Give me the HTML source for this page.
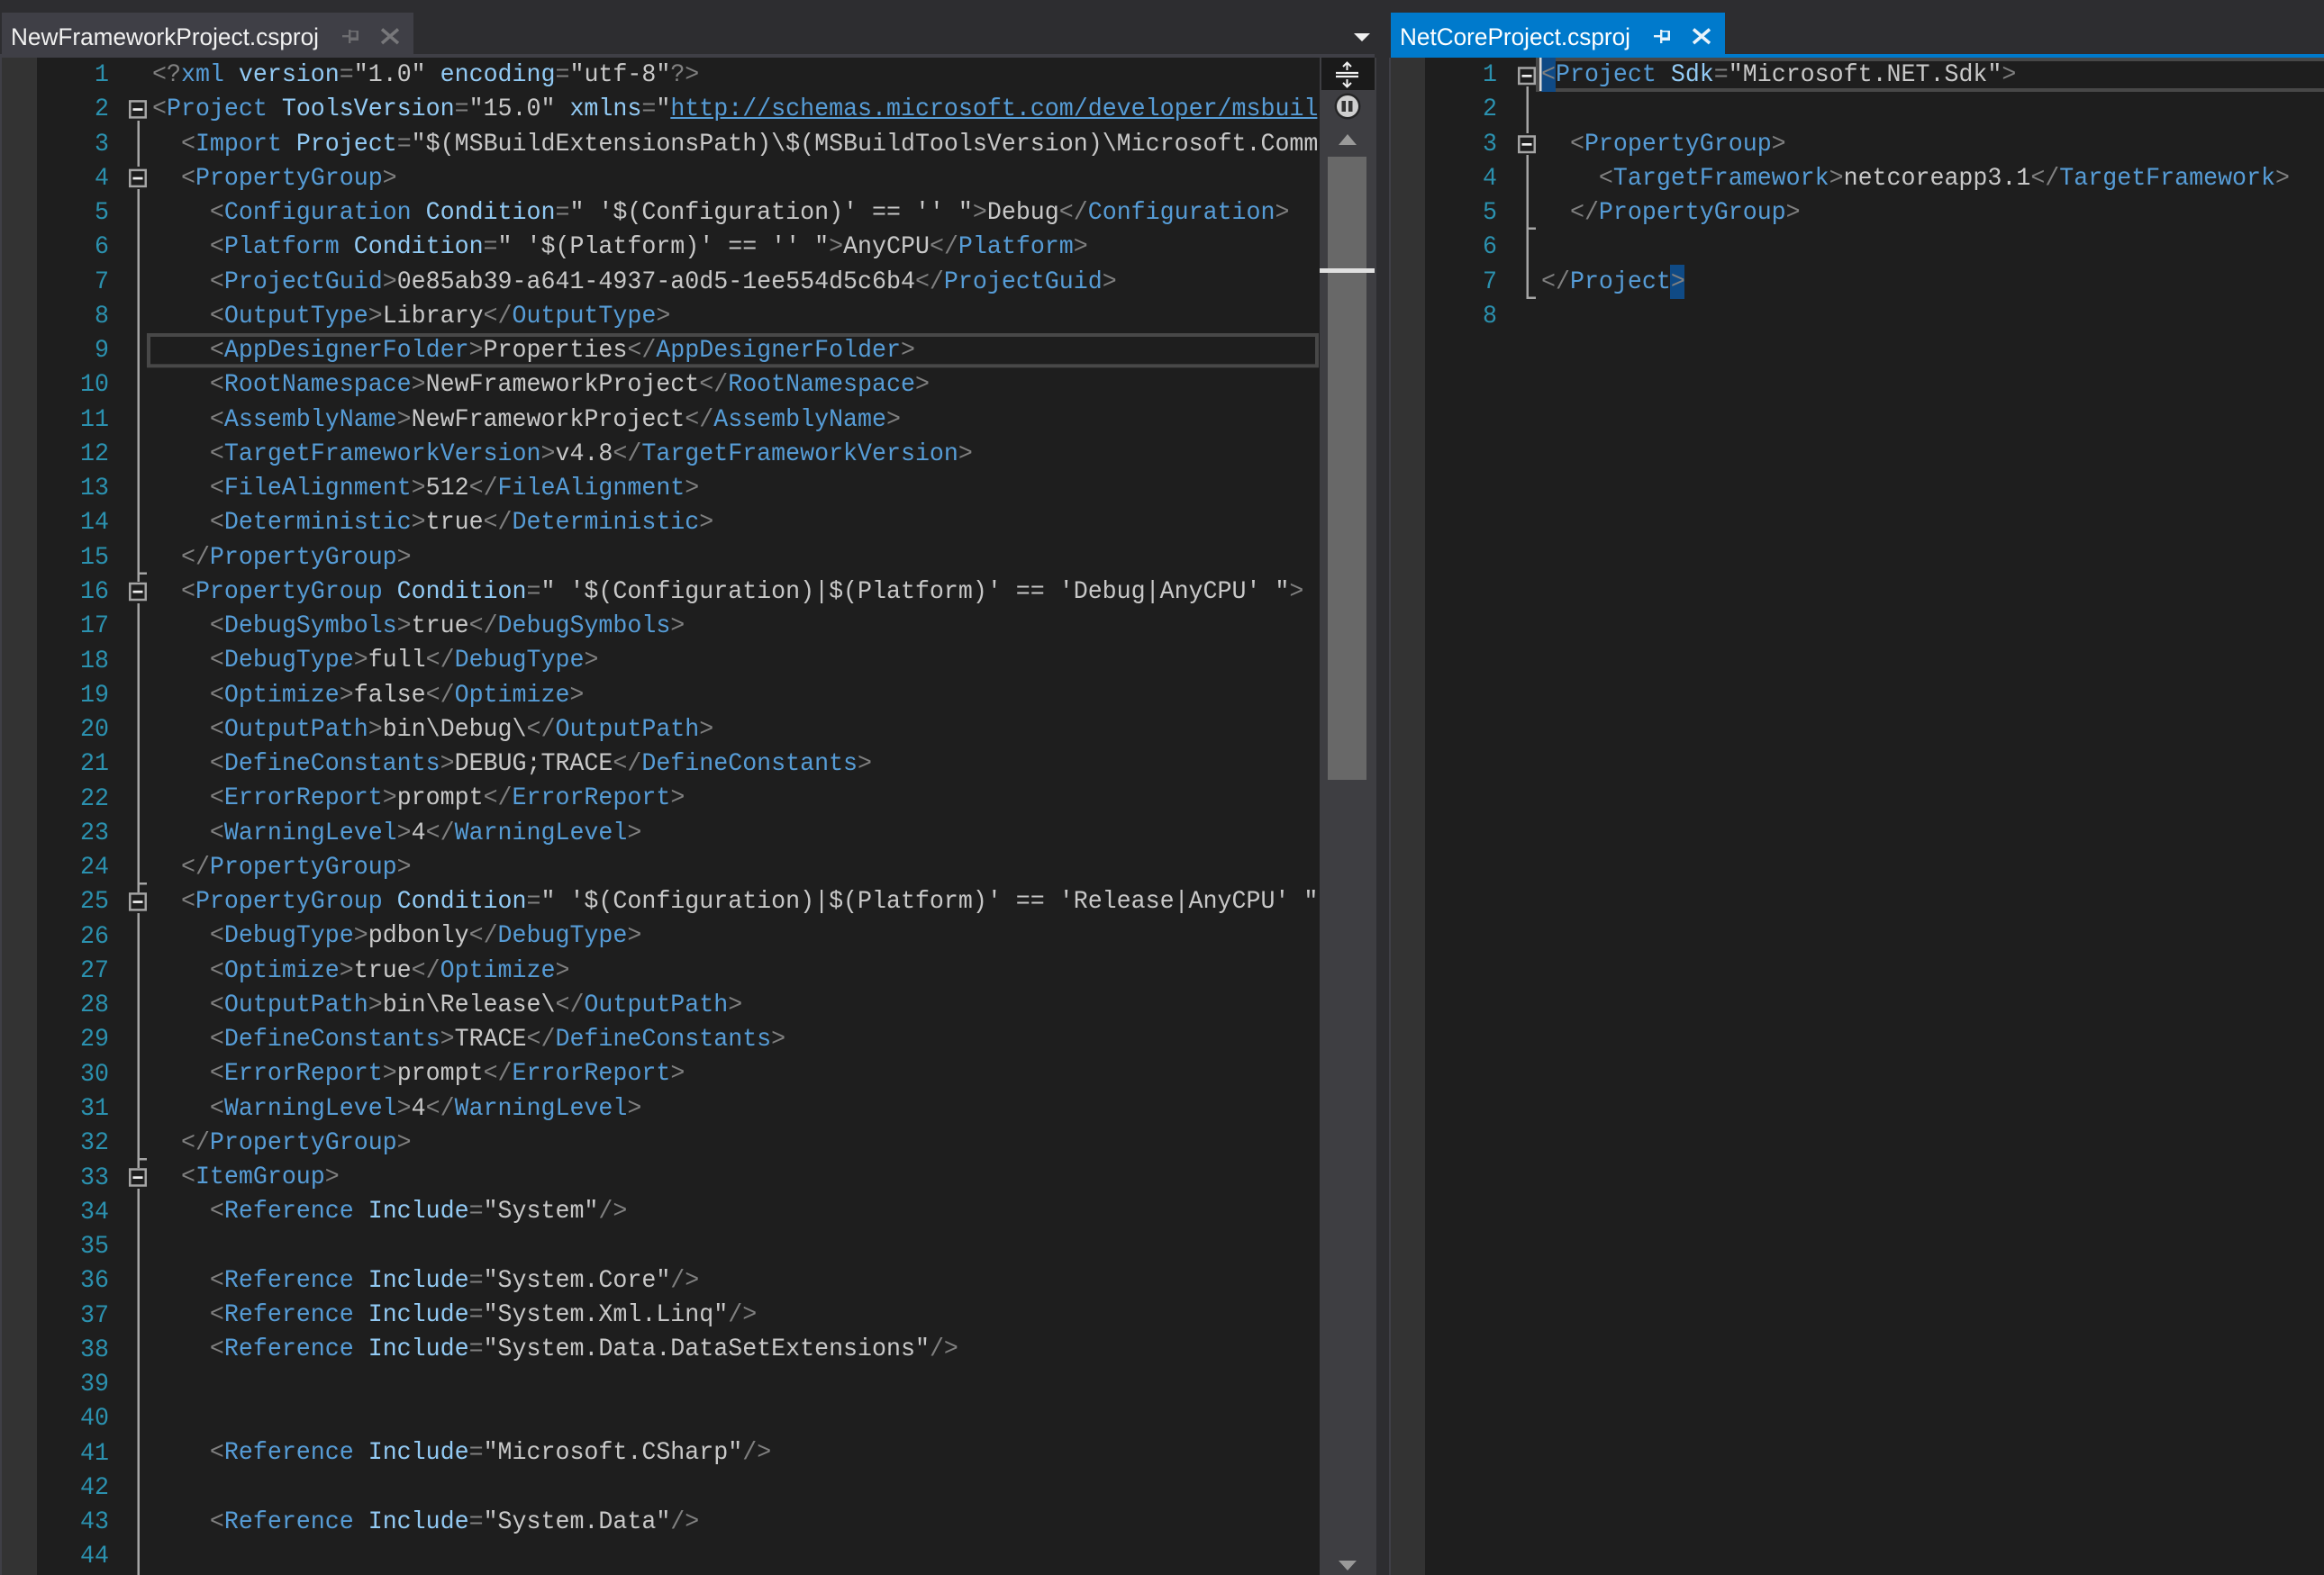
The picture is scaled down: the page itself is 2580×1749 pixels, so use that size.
<!DOCTYPE html>
<html><head><meta charset="utf-8"><title>csproj</title>
<style>
html,body{margin:0;padding:0;width:2580px;height:1749px;overflow:hidden;background:#2d2d30}
svg{position:absolute;left:0;top:0}
.c{position:absolute;top:65px;font:28px/38.26px "Liberation Mono",monospace;color:#c8c8c8;white-space:normal;overflow:hidden;transform:scaleX(.951);transform-origin:0 0;height:1684px}
.c div{height:38.26px;white-space:pre}
.n{color:#2b91af;text-align:right;transform-origin:100% 0;white-space:pre}
i{font-style:normal;color:#808080}
b{font-weight:normal;color:#569cd6}
em{font-style:normal;color:#92caf4}
u{color:#569cd6}
</style></head><body>
<svg width="2580" height="1749" viewBox="0 0 2580 1749">
<rect width="2580" height="1749" fill="#2d2d30"/>
<rect x="0" y="60" width="1526" height="4" fill="#3f3f46"/>
<rect x="2" y="14" width="457" height="50" fill="#3f3f46"/>
<rect x="1544" y="14" width="371" height="50" fill="#007acc"/>
<rect x="1544" y="60" width="1036" height="4" fill="#007acc"/>
<rect x="0" y="64" width="2" height="1685" fill="#3f3f46"/>
<rect x="2" y="64" width="39" height="1685" fill="#333333"/>
<rect x="41" y="64" width="1424" height="1685" fill="#1e1e1e"/>
<rect x="1465" y="64" width="63" height="1685" fill="#3e3e42"/>
<rect x="1528" y="64" width="14" height="1685" fill="#2d2d30"/>
<rect x="1542" y="64" width="2" height="1685" fill="#3f3f46"/>
<rect x="1544" y="64" width="38" height="1685" fill="#333333"/>
<rect x="1582" y="64" width="998" height="1685" fill="#1e1e1e"/>
<!-- highlights -->
<rect x="165" y="372" width="1297" height="34.3" fill="none" stroke="#484848" stroke-width="4"/>
<rect x="1707" y="66" width="875" height="34" fill="none" stroke="#484848" stroke-width="4"/>
<rect x="1711" y="64" width="16" height="38" fill="#0f4a85"/>
<rect x="1854" y="294" width="16" height="38" fill="#0f4a85"/>
<rect x="1709" y="64" width="2.5" height="37" fill="#d8d8d8"/>
<!-- left folds -->
<g fill="#a5a5a5">
<rect x="152.5" y="134" width="2.5" height="51"/>
<rect x="152.5" y="210" width="2.5" height="436"/>
<rect x="152.5" y="670" width="2.5" height="321"/>
<rect x="152.5" y="1014" width="2.5" height="283"/>
<rect x="152.5" y="1320" width="2.5" height="429"/>
<rect x="152.5" y="635.5" width="10.5" height="2.5"/>
<rect x="152.5" y="980" width="10.5" height="2.5"/>
<rect x="152.5" y="1286" width="10.5" height="2.5"/>
<rect x="1694.5" y="96" width="2.5" height="52"/>
<rect x="1694.5" y="172" width="2.5" height="160"/>
<rect x="1694.5" y="252.500" width="10.5" height="2.5"/>
<rect x="1694.5" y="329.500" width="10.5" height="2.5"/>
</g>
<g fill="#1e1e1e" stroke="#a5a5a5" stroke-width="2.5">
<rect x="144.25" y="112.400" width="17.5" height="18"/>
<rect x="144.25" y="188.900" width="17.5" height="18"/>
<rect x="144.25" y="648" width="17.5" height="18"/>
<rect x="144.25" y="992.400" width="17.5" height="18"/>
<rect x="144.25" y="1298.500" width="17.5" height="18"/>
<rect x="1686.25" y="75.500" width="17.5" height="17.5"/>
<rect x="1686.25" y="151.500" width="17.5" height="17.5"/>
</g>
<g fill="#eeeeee">
<rect x="147.500" y="120.200" width="11" height="2.7"/>
<rect x="147.500" y="196.700" width="11" height="2.7"/>
<rect x="147.500" y="655.800" width="11" height="2.7"/>
<rect x="147.500" y="1000.200" width="11" height="2.7"/>
<rect x="147.500" y="1306.300" width="11" height="2.7"/>
<rect x="1689.500" y="83" width="11" height="2.7"/>
<rect x="1689.500" y="159" width="11" height="2.7"/>
</g>
<!-- tabs -->
<text x="12" y="50" font-family="Liberation Sans,sans-serif" font-size="27" fill="#f1f1f1" textLength="342" lengthAdjust="spacingAndGlyphs">NewFrameworkProject.csproj</text>
<text x="1554" y="50" font-family="Liberation Sans,sans-serif" font-size="27" fill="#ffffff" textLength="256" lengthAdjust="spacingAndGlyphs">NetCoreProject.csproj</text>
<g fill="#6d6d70">
<rect x="380" y="39" width="8" height="2.4"/>
<rect x="387" y="33" width="2.4" height="15"/>
<path d="M389 34h9v11h-9v-3.500h6.500v-6h-6.500z"/>
</g>
<path d="M424 32.500L442 48M442 32.500L424 48" stroke="#77777a" stroke-width="3.500" fill="none"/>
<g fill="#e8f3fb">
<rect x="1836" y="39" width="8" height="2.4"/>
<rect x="1843" y="33" width="2.4" height="15"/>
<path d="M1845 34h9v11h-9v-3.500h6.500v-6h-6.500z"/>
</g>
<path d="M1880 32.500L1898 48M1898 32.500L1880 48" stroke="#e8f3fb" stroke-width="3.500" fill="none"/>
<path d="M1503 37h18l-9 9z" fill="#f1f1f1"/>
<!-- scrollbar -->
<rect x="1467" y="64" width="59" height="36" fill="#1a1a1a"/>
<g fill="none" stroke="#f1f1f1" stroke-width="2">
<path d="M1483 81h25M1483 85h25" stroke-width="2.2"/>
<path d="M1495.500 70v8M1495.500 88v8"/>
<path d="M1491 74l4.500-4.500 4.500 4.500M1491 92l4.500 4.500 4.500-4.500"/>
</g>
<circle cx="1496" cy="118" r="14.500" fill="#252526"/>
<circle cx="1496" cy="118" r="12" fill="#cfcfcf"/>
<rect x="1489.500" y="112" width="4.500" height="12" fill="#333"/>
<rect x="1497" y="112" width="4.500" height="12" fill="#333"/>
<path d="M1486 161l10-12 10 12z" fill="#999999"/>
<rect x="1474" y="174" width="43" height="692" fill="#686868"/>
<rect x="1465" y="298" width="61" height="5" fill="#e0e0e0"/>
<path d="M1486 1733h20l-10 11z" fill="#999999"/>
</svg>

<div class="c n" style="left:21px;width:100px">1
2
3
4
5
6
7
8
9
10
11
12
13
14
15
16
17
18
19
20
21
22
23
24
25
26
27
28
29
30
31
32
33
34
35
36
37
38
39
40
41
42
43
44</div>

<div class="c" style="left:168.5px;width:1360px"><div><i>&lt;?</i><b>xml</b> <em>version</em><i>=</i>"1.0" <em>encoding</em><i>=</i>"utf-8"<i>?&gt;</i></div>
<div><i>&lt;</i><b>Project</b> <em>ToolsVersion</em><i>=</i>"15.0" <em>xmlns</em><i>=</i>"<u>http://schemas.microsoft.com/developer/msbuild/2003</u>"<i>&gt;</i></div>
<div>  <i>&lt;</i><b>Import</b> <em>Project</em><i>=</i>"$(MSBuildExtensionsPath)\$(MSBuildToolsVersion)\Microsoft.Common.props"<i>/&gt;</i></div>
<div>  <i>&lt;</i><b>PropertyGroup</b><i>&gt;</i></div>
<div>    <i>&lt;</i><b>Configuration</b> <em>Condition</em><i>=</i>" '$(Configuration)' == '' "<i>&gt;</i>Debug<i>&lt;/</i><b>Configuration</b><i>&gt;</i></div>
<div>    <i>&lt;</i><b>Platform</b> <em>Condition</em><i>=</i>" '$(Platform)' == '' "<i>&gt;</i>AnyCPU<i>&lt;/</i><b>Platform</b><i>&gt;</i></div>
<div>    <i>&lt;</i><b>ProjectGuid</b><i>&gt;</i>0e85ab39-a641-4937-a0d5-1ee554d5c6b4<i>&lt;/</i><b>ProjectGuid</b><i>&gt;</i></div>
<div>    <i>&lt;</i><b>OutputType</b><i>&gt;</i>Library<i>&lt;/</i><b>OutputType</b><i>&gt;</i></div>
<div>    <i>&lt;</i><b>AppDesignerFolder</b><i>&gt;</i>Properties<i>&lt;/</i><b>AppDesignerFolder</b><i>&gt;</i></div>
<div>    <i>&lt;</i><b>RootNamespace</b><i>&gt;</i>NewFrameworkProject<i>&lt;/</i><b>RootNamespace</b><i>&gt;</i></div>
<div>    <i>&lt;</i><b>AssemblyName</b><i>&gt;</i>NewFrameworkProject<i>&lt;/</i><b>AssemblyName</b><i>&gt;</i></div>
<div>    <i>&lt;</i><b>TargetFrameworkVersion</b><i>&gt;</i>v4.8<i>&lt;/</i><b>TargetFrameworkVersion</b><i>&gt;</i></div>
<div>    <i>&lt;</i><b>FileAlignment</b><i>&gt;</i>512<i>&lt;/</i><b>FileAlignment</b><i>&gt;</i></div>
<div>    <i>&lt;</i><b>Deterministic</b><i>&gt;</i>true<i>&lt;/</i><b>Deterministic</b><i>&gt;</i></div>
<div>  <i>&lt;/</i><b>PropertyGroup</b><i>&gt;</i></div>
<div>  <i>&lt;</i><b>PropertyGroup</b> <em>Condition</em><i>=</i>" '$(Configuration)|$(Platform)' == 'Debug|AnyCPU' "<i>&gt;</i></div>
<div>    <i>&lt;</i><b>DebugSymbols</b><i>&gt;</i>true<i>&lt;/</i><b>DebugSymbols</b><i>&gt;</i></div>
<div>    <i>&lt;</i><b>DebugType</b><i>&gt;</i>full<i>&lt;/</i><b>DebugType</b><i>&gt;</i></div>
<div>    <i>&lt;</i><b>Optimize</b><i>&gt;</i>false<i>&lt;/</i><b>Optimize</b><i>&gt;</i></div>
<div>    <i>&lt;</i><b>OutputPath</b><i>&gt;</i>bin\Debug\<i>&lt;/</i><b>OutputPath</b><i>&gt;</i></div>
<div>    <i>&lt;</i><b>DefineConstants</b><i>&gt;</i>DEBUG;TRACE<i>&lt;/</i><b>DefineConstants</b><i>&gt;</i></div>
<div>    <i>&lt;</i><b>ErrorReport</b><i>&gt;</i>prompt<i>&lt;/</i><b>ErrorReport</b><i>&gt;</i></div>
<div>    <i>&lt;</i><b>WarningLevel</b><i>&gt;</i>4<i>&lt;/</i><b>WarningLevel</b><i>&gt;</i></div>
<div>  <i>&lt;/</i><b>PropertyGroup</b><i>&gt;</i></div>
<div>  <i>&lt;</i><b>PropertyGroup</b> <em>Condition</em><i>=</i>" '$(Configuration)|$(Platform)' == 'Release|AnyCPU' "<i>&gt;</i></div>
<div>    <i>&lt;</i><b>DebugType</b><i>&gt;</i>pdbonly<i>&lt;/</i><b>DebugType</b><i>&gt;</i></div>
<div>    <i>&lt;</i><b>Optimize</b><i>&gt;</i>true<i>&lt;/</i><b>Optimize</b><i>&gt;</i></div>
<div>    <i>&lt;</i><b>OutputPath</b><i>&gt;</i>bin\Release\<i>&lt;/</i><b>OutputPath</b><i>&gt;</i></div>
<div>    <i>&lt;</i><b>DefineConstants</b><i>&gt;</i>TRACE<i>&lt;/</i><b>DefineConstants</b><i>&gt;</i></div>
<div>    <i>&lt;</i><b>ErrorReport</b><i>&gt;</i>prompt<i>&lt;/</i><b>ErrorReport</b><i>&gt;</i></div>
<div>    <i>&lt;</i><b>WarningLevel</b><i>&gt;</i>4<i>&lt;/</i><b>WarningLevel</b><i>&gt;</i></div>
<div>  <i>&lt;/</i><b>PropertyGroup</b><i>&gt;</i></div>
<div>  <i>&lt;</i><b>ItemGroup</b><i>&gt;</i></div>
<div>    <i>&lt;</i><b>Reference</b> <em>Include</em><i>=</i>"System"<i>/&gt;</i></div>
<div></div>
<div>    <i>&lt;</i><b>Reference</b> <em>Include</em><i>=</i>"System.Core"<i>/&gt;</i></div>
<div>    <i>&lt;</i><b>Reference</b> <em>Include</em><i>=</i>"System.Xml.Linq"<i>/&gt;</i></div>
<div>    <i>&lt;</i><b>Reference</b> <em>Include</em><i>=</i>"System.Data.DataSetExtensions"<i>/&gt;</i></div>
<div></div>
<div></div>
<div>    <i>&lt;</i><b>Reference</b> <em>Include</em><i>=</i>"Microsoft.CSharp"<i>/&gt;</i></div>
<div></div>
<div>    <i>&lt;</i><b>Reference</b> <em>Include</em><i>=</i>"System.Data"<i>/&gt;</i></div>
<div></div></div>

<div class="c n" style="left:1562px;width:100px">1
2
3
4
5
6
7
8</div>

<div class="c" style="left:1711px;width:915px"><div><i>&lt;</i><b>Project</b> <em>Sdk</em><i>=</i>"Microsoft.NET.Sdk"<i>&gt;</i></div>
<div></div>
<div>  <i>&lt;</i><b>PropertyGroup</b><i>&gt;</i></div>
<div>    <i>&lt;</i><b>TargetFramework</b><i>&gt;</i>netcoreapp3.1<i>&lt;/</i><b>TargetFramework</b><i>&gt;</i></div>
<div>  <i>&lt;/</i><b>PropertyGroup</b><i>&gt;</i></div>
<div></div>
<div><i>&lt;/</i><b>Project</b><i>&gt;</i></div>
<div></div></div>
</body></html>
